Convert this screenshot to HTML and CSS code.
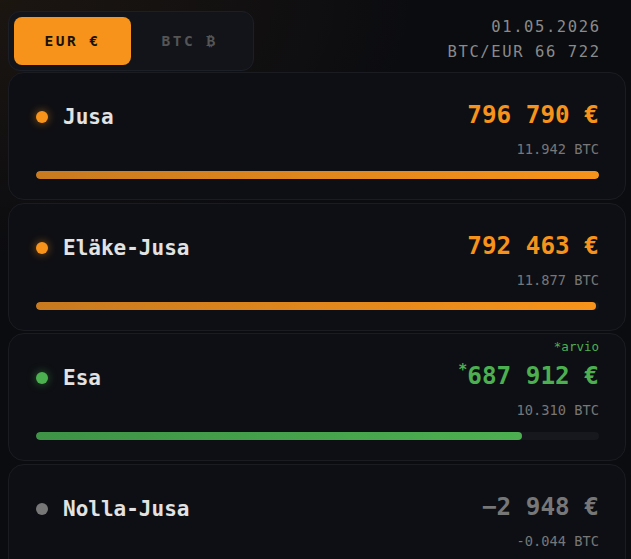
FILE: index.html
```html
<!DOCTYPE html>
<html lang="fi">
<head>
    <meta charset="UTF-8">
    <meta name="viewport" content="width=device-width, initial-scale=1.0">
    <title>Salkut</title>
    <link rel="stylesheet" href="styles.css">
</head>
<body>
    <div class="page">
        <div class="header">
            <div class="toggle">
                <button class="toggle-btn active">EUR €</button>
                <button class="toggle-btn">BTC ₿</button>
            </div>
            <div class="rate">
                <div>01.05.2026</div>
                <div>BTC/EUR 66 722</div>
            </div>
        </div>

        <div class="card">
            <div class="card-top">
                <div class="who"><span class="dot orange"></span><span class="name">Jusa</span></div>
                <div class="sums">
                    <div class="amount orange-text">796 790 €</div>
                    <div class="btc">11.942 BTC</div>
                </div>
            </div>
            <div class="track"><div class="fill orange-fill" style="width: 100%"></div></div>
        </div>

        <div class="card">
            <div class="card-top">
                <div class="who"><span class="dot orange"></span><span class="name">Eläke-Jusa</span></div>
                <div class="sums">
                    <div class="amount orange-text">792 463 €</div>
                    <div class="btc">11.877 BTC</div>
                </div>
            </div>
            <div class="track"><div class="fill orange-fill" style="width: 99.5%"></div></div>
        </div>

        <div class="card">
            <span class="estimate">*arvio</span>
            <div class="card-top">
                <div class="who"><span class="dot green"></span><span class="name">Esa</span></div>
                <div class="sums">
                    <div class="amount green-text"><sup class="star">*</sup>687 912 €</div>
                    <div class="btc">10.310 BTC</div>
                </div>
            </div>
            <div class="track"><div class="fill green-fill" style="width: 86.3%"></div></div>
        </div>

        <div class="card">
            <div class="card-top">
                <div class="who"><span class="dot gray"></span><span class="name">Nolla-Jusa</span></div>
                <div class="sums">
                    <div class="amount gray-text">−2 948 €</div>
                    <div class="btc">-0.044 BTC</div>
                </div>
            </div>
            <div class="track"><div class="fill" style="width: 0%"></div></div>
        </div>
    </div>
</body>
</html>
```

FILE: styles.css
```css
* {
    margin: 0;
    padding: 0;
    box-sizing: border-box;
    font-family: 'DejaVu Sans Mono', 'Liberation Mono', monospace;
}

body {
    background: #0b0c10;
    background-image: radial-gradient(ellipse 420px 260px at 0 0, rgba(247, 147, 26, 0.07), transparent 100%);
    height: 100vh;
    overflow: hidden;
}

.page {
    padding: 11px 5px 0 8px;
}

.header {
    display: flex;
    justify-content: space-between;
    align-items: flex-start;
    padding-right: 27px;
    margin-bottom: 1px;
}

.toggle {
    display: flex;
    padding: 5px;
    background-color: #121419;
    border: 1px solid #1d1f26;
    border-radius: 12px;
}

.toggle-btn {
    width: 117px;
    height: 48px;
    border: none;
    border-radius: 8px;
    background: transparent;
    color: #555;
    font-size: 14.5px;
    font-weight: 700;
    letter-spacing: 2.5px;
}

.toggle-btn.active {
    background-color: #f7931a;
    color: #15110a;
}

.rate {
    margin-top: 4px;
    text-align: right;
    color: #8a8a8a;
    font-size: 15.5px;
    line-height: 25px;
    letter-spacing: 1.6px;
    margin-right: -1.6px;
}

.card {
    position: relative;
    height: 128px;
    margin-bottom: 2.6px;
    padding: 27px 26px 0 27px;
    background-color: #0e0f14;
    border: 1px solid #1a1c22;
    border-radius: 16px;
}

.card-top {
    display: flex;
    justify-content: space-between;
}

.who {
    display: flex;
    align-items: center;
    gap: 15px;
    height: 30px;
    padding-top: 4px;
}

.dot {
    width: 12px;
    height: 12px;
    border-radius: 50%;
}

.dot.orange {
    background-color: #f7931a;
    box-shadow: 0 0 9px rgba(247, 147, 26, 0.55);
}

.dot.green {
    background-color: #4caf50;
    box-shadow: 0 0 9px rgba(76, 175, 80, 0.5);
}

.dot.gray {
    background-color: #777;
}

.name {
    color: #e2e2e2;
    font-size: 21px;
    font-weight: 700;
}

.sums {
    text-align: right;
}

.amount {
    font-size: 24.3px;
    font-weight: 700;
    line-height: 30px;
}

.orange-text { color: #f7931a; }
.green-text { color: #4caf50; }
.gray-text { color: #777; }

.star {
    font-size: 15px;
    vertical-align: 9px;
    line-height: 0;
}

.btc {
    margin-top: 10px;
    color: #777;
    font-size: 13.7px;
    line-height: 18px;
}

.estimate {
    position: absolute;
    top: 5px;
    right: 26px;
    color: #4caf50;
    font-size: 12.5px;
}

.track {
    margin-top: 13px;
    height: 8px;
    border-radius: 4px;
    background-color: #16181e;
    overflow: hidden;
}

.fill {
    height: 100%;
    border-radius: 4px;
}

.orange-fill {
    background: linear-gradient(90deg, #c97a1f, #f7931a);
}

.green-fill {
    background: linear-gradient(90deg, #3e9346, #4caf50);
}
```
